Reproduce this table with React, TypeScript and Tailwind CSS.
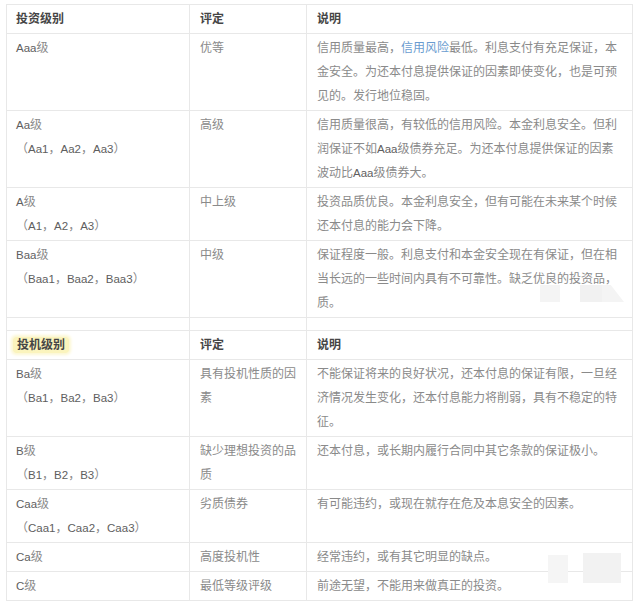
import React from "react";

type Line = React.ReactNode;
type Row = { c1: Line[]; c2: Line[]; c3: Line[] };

function fmt(s: string): React.ReactNode {
  const parts = s.split(/([A-Za-z0-9]+)/);
  return parts.map((p, i) =>
    /^[A-Za-z0-9]+$/.test(p) ? (
      <span key={i} className="text-[11.5px] text-[#5e5e5e]">
        {p}
      </span>
    ) : (
      <React.Fragment key={i}>{p}</React.Fragment>
    )
  );
}

const L = (s: string) => fmt(s);

const rows1: Row[] = [
  {
    c1: [L("Aaa级")],
    c2: ["优等"],
    c3: [
      <>
        信用质量最高，<span className="text-[#6a9cd0]">信用风险</span>最低。利息支付有充足保证，本
      </>,
      "金安全。为还本付息提供保证的因素即使变化，也是可预",
      "见的。发行地位稳固。",
    ],
  },
  {
    c1: [L("Aa级"), L("（Aa1，Aa2，Aa3）")],
    c2: ["高级"],
    c3: [
      "信用质量很高，有较低的信用风险。本金利息安全。但利",
      L("润保证不如Aaa级债券充足。为还本付息提供保证的因素"),
      L("波动比Aaa级债券大。"),
    ],
  },
  {
    c1: [L("A级"), L("（A1，A2，A3）")],
    c2: ["中上级"],
    c3: ["投资品质优良。本金利息安全，但有可能在未来某个时候", "还本付息的能力会下降。"],
  },
  {
    c1: [L("Baa级"), L("（Baa1，Baa2，Baa3）")],
    c2: ["中级"],
    c3: [
      "保证程度一般。利息支付和本金安全现在有保证，但在相",
      "当长远的一些时间内具有不可靠性。缺乏优良的投资品，",
      "质。",
    ],
  },
];

const rows2: Row[] = [
  {
    c1: [L("Ba级"), L("（Ba1，Ba2，Ba3）")],
    c2: ["具有投机性质的因", "素"],
    c3: [
      "不能保证将来的良好状况，还本付息的保证有限，一旦经",
      "济情况发生变化，还本付息能力将削弱，具有不稳定的特",
      "征。",
    ],
  },
  {
    c1: [L("B级"), L("（B1，B2，B3）")],
    c2: ["缺少理想投资的品", "质"],
    c3: ["还本付息，或长期内履行合同中其它条款的保证极小。"],
  },
  {
    c1: [L("Caa级"), L("（Caa1，Caa2，Caa3）")],
    c2: ["劣质债券"],
    c3: ["有可能违约，或现在就存在危及本息安全的因素。"],
  },
  {
    c1: [L("Ca级")],
    c2: ["高度投机性"],
    c3: ["经常违约，或有其它明显的缺点。"],
  },
  {
    c1: [L("C级")],
    c2: ["最低等级评级"],
    c3: ["前途无望，不能用来做真正的投资。"],
  },
];

function Cell({ lines, first }: { lines: Line[]; first?: boolean }) {
  return (
    <div
      className={
        "border-r border-b border-[#e8e8e8] pt-[2px] pb-[2px] pr-[4px] " +
        (first ? "pl-[9px]" : "pl-[10px]")
      }
    >
      {lines.map((l, i) => (
        <div key={i} className="whitespace-nowrap leading-[24px] h-[24px]">
          {l}
        </div>
      ))}
    </div>
  );
}

function HeadCell({ children, first }: { children: React.ReactNode; first?: boolean }) {
  return (
    <div
      className={
        "border-r border-b border-[#e8e8e8] pt-[2px] pb-[2px] font-bold text-[#454545] " +
        (first ? "pl-[9px]" : "pl-[10px]")
      }
    >
      <div className="leading-[24px] h-[24px] whitespace-nowrap">{children}</div>
    </div>
  );
}

function BodyRows({ rows }: { rows: Row[] }) {
  return (
    <>
      {rows.map((r, i) => (
        <React.Fragment key={i}>
          <Cell lines={r.c1} first />
          <Cell lines={r.c2} />
          <Cell lines={r.c3} />
        </React.Fragment>
      ))}
    </>
  );
}

export default function App() {
  return (
    <div
      className="relative w-[637px] h-[601px] bg-white overflow-hidden pt-[4px] pl-[6px]"
      style={{ fontFamily: '"Liberation Sans", "Noto Sans CJK SC", sans-serif' }}
    >
      <div className="grid grid-cols-[183px_117px_326px] w-[627px] border-t border-l border-[#e8e8e8] text-[12px] text-[#8a8a8a]">
        <HeadCell first>投资级别</HeadCell>
        <HeadCell>评定</HeadCell>
        <HeadCell>说明</HeadCell>
        <BodyRows rows={rows1} />

        <div className="h-[13px] border-r border-b border-[#e8e8e8]" />
        <div className="h-[13px] border-r border-b border-[#e8e8e8]" />
        <div className="h-[13px] border-r border-b border-[#e8e8e8]" />

        <HeadCell first>
          <span className="relative -ml-[3px] rounded-[3px] bg-[#fbf4bd] px-[4px] py-[1px] shadow-[0_0_3px_2px_#fcf7d2]">
            投机级别
          </span>
        </HeadCell>
        <HeadCell>评定</HeadCell>
        <HeadCell>说明</HeadCell>
        <BodyRows rows={rows2} />
      </div>

      {/* faint watermark remnants */}
      <div className="absolute left-[538px] top-[290px] w-[90px] h-[12px] bg-white/70" />
      <div className="absolute left-[540px] top-[285px] w-[20px] h-[17px] bg-[#f3f3f3]/90" />
      <div className="absolute left-[580px] top-[285px] w-[22px] h-[17px] bg-[#f0f0f0]/90" />
      <div
        className="absolute left-[602px] top-[285px] w-[22px] h-[17px] bg-[#f4f4f4]"
        style={{ clipPath: "polygon(0 0, 40% 0, 100% 100%, 0 100%)" }}
      />
      <div className="absolute left-[548px] top-[555px] w-[20px] h-[28px] bg-[#f5f5f5]" />
      <div className="absolute left-[583px] top-[553px] w-[38px] h-[30px] bg-[#f2f2f2]" />
    </div>
  );
}
